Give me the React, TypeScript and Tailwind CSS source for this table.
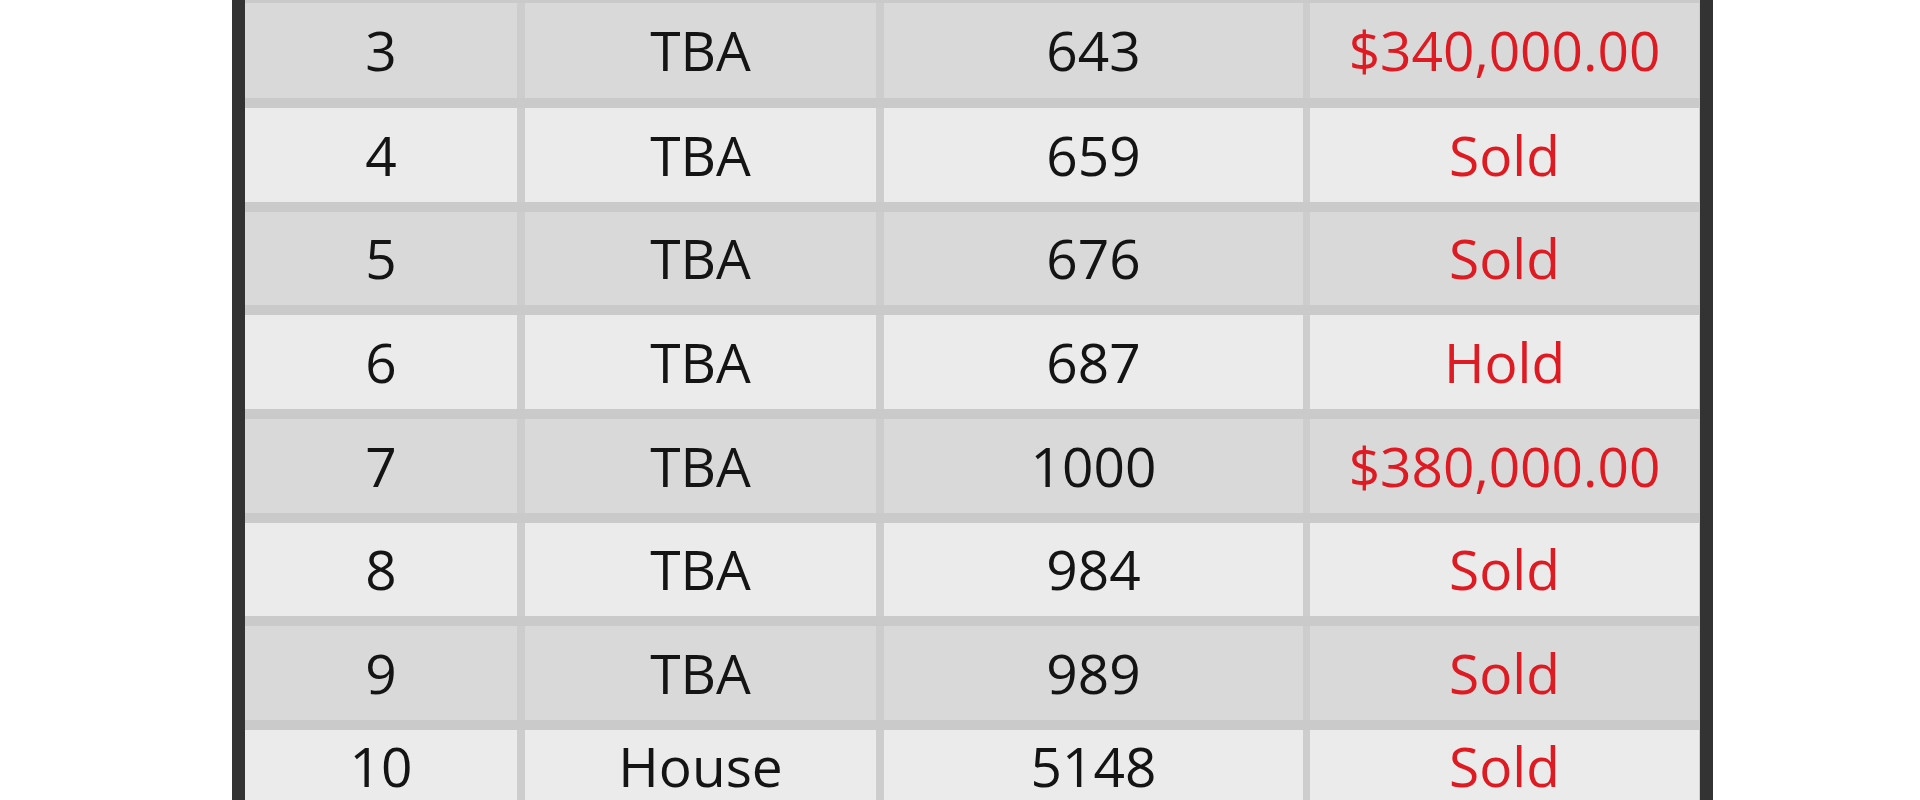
import React from "react";

type Row = { n: string; type: string; size: string; price: string; h: string; dark: boolean };

const rows: Row[] = [
  { n: "3", type: "TBA", size: "643", price: "$340,000.00", h: "h-[95px]", dark: true },
  { n: "4", type: "TBA", size: "659", price: "Sold", h: "h-[94px]", dark: false },
  { n: "5", type: "TBA", size: "676", price: "Sold", h: "h-[93px]", dark: true },
  { n: "6", type: "TBA", size: "687", price: "Hold", h: "h-[94px]", dark: false },
  { n: "7", type: "TBA", size: "1000", price: "$380,000.00", h: "h-[94px]", dark: true },
  { n: "8", type: "TBA", size: "984", price: "Sold", h: "h-[93px]", dark: false },
  { n: "9", type: "TBA", size: "989", price: "Sold", h: "h-[94px]", dark: true },
  { n: "10", type: "House", size: "5148", price: "Sold", h: "h-[72px]", dark: false },
];

function Cell({ w, bg, children, red }: { w: string; bg: string; children: React.ReactNode; red?: boolean }) {
  return (
    <div className={`${w} ${bg} flex items-center justify-center`}>
      <span
        className={`text-[55px] leading-[1.1] ${red ? "text-[#de1a22]" : "text-[#141414]"}`}
        style={{ fontFamily: '"Open Sans", "Noto Sans", sans-serif' }}
      >
        {children}
      </span>
    </div>
  );
}

export default function App() {
  return (
    <div className="h-[800px] w-[1920px] overflow-hidden bg-white">
      <div className="ml-[232px] w-[1481px] border-x-[13px] border-[#333333] bg-[#cacaca]">
        <div className="h-[3px] bg-[#cacaca]" />
        {rows.map((r, i) => {
          const bg = r.dark ? "bg-[#d9d9d9]" : "bg-[#ebebeb]";
          return (
            <div key={r.n} className={i > 0 ? "border-t-[10px] border-[#cacaca]" : ""}>
              <div className={`${r.h} flex bg-[#cdcdcd]`}>
                <Cell w="w-[272px]" bg={bg}>{r.n}</Cell>
                <div className="w-[8px]" />
                <Cell w="w-[351px]" bg={bg}>{r.type}</Cell>
                <div className="w-[8px]" />
                <Cell w="w-[419px]" bg={bg}>{r.size}</Cell>
                <div className="w-[7px]" />
                <Cell w="w-[389px]" bg={bg} red>
                  {r.price}
                </Cell>
              </div>
            </div>
          );
        })}
        <div className="h-[20px] bg-[#ebebeb]" />
      </div>
    </div>
  );
}
